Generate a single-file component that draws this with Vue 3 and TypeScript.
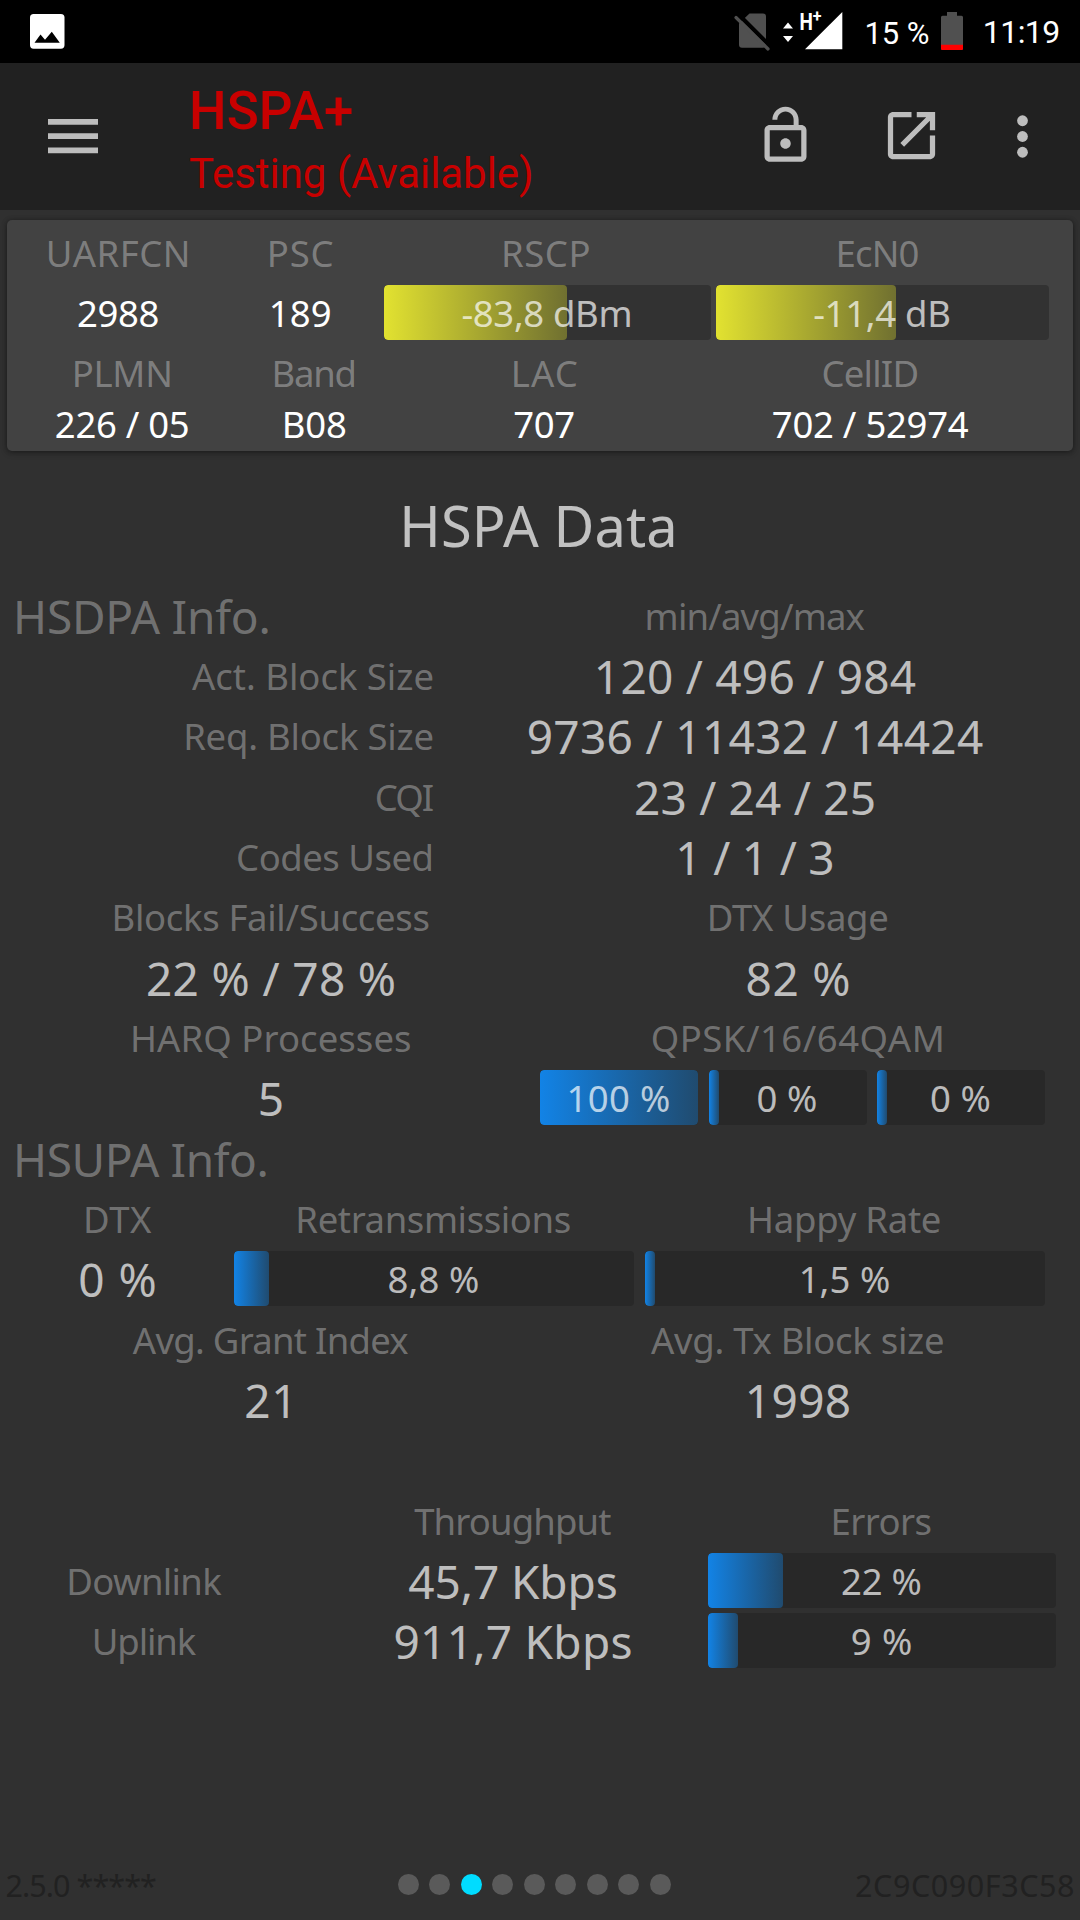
<script setup lang="ts">
type Kind = 'label' | 'value' | 'small' | 'section' | 'end' | 'bars' | 'empty'

interface Meter {
  text: string
  ink: number
  width: number
  fill: number
}

interface Cell {
  kind: Kind
  text?: string
  ink?: number
  meters?: Meter[]
}

interface Row {
  layout: string
  cells: Cell[]
}

const label = (text: string, ink: number): Cell => ({ kind: 'label', text, ink })
const value = (text: string, ink: number): Cell => ({ kind: 'value', text, ink })
const small = (text: string, ink: number): Cell => ({ kind: 'small', text, ink })
const end = (text: string, ink: number): Cell => ({ kind: 'end', text, ink })
const section = (text: string, ink: number): Cell => ({ kind: 'section', text, ink })
const empty = (): Cell => ({ kind: 'empty' })
const meters = (...list: [string, number, number, number][]): Cell => ({
  kind: 'bars',
  meters: list.map(([text, ink, width, fill]) => ({ text, ink, width, fill })),
})

const cellRows: Row[] = [
  { layout: 'signal', cells: [label('UARFCN', 139), label('PSC', 62.7), label('RSCP', 85.5), label('EcN0', 80)] },
  { layout: 'signal', cells: [small('2988', 80.6), small('189', 58), meters(['-83,8 dBm', 168, 327, 183]), meters(['-11,4 dB', 135, 333, 180])] },
  { layout: 'identity', cells: [label('PLMN', 95.5), label('Band', 80.2), label('LAC', 63), label('CellID', 94)] },
  { layout: 'identity low', cells: [small('226 / 05', 131.9), small('B08', 61.2), small('707', 60), small('702 / 52974', 196)] },
]

const dataRows: Row[] = [
  { layout: 'stats', cells: [section('HSDPA Info.', 251.5), label('min/avg/max', 217)] },
  { layout: 'stats', cells: [end('Act. Block Size', 240.4), value('120 / 496 / 984', 318)] },
  { layout: 'stats', cells: [end('Req. Block Size', 246.3), value('9736 / 11432 / 14424', 454.3)] },
  { layout: 'stats', cells: [end('CQI', 55.8), value('23 / 24 / 25', 237.6)] },
  { layout: 'stats', cells: [end('Codes Used', 193.5), value('1 / 1 / 3', 153)] },
  { layout: 'halves', cells: [label('Blocks Fail/Success', 314), label('DTX Usage', 177.6)] },
  { layout: 'halves', cells: [value('22 % / 78 %', 246), value('82 %', 100.6)] },
  { layout: 'halves', cells: [label('HARQ Processes', 277.2), label('QPSK/16/64QAM', 288.9)] },
  { layout: 'halves', cells: [value('5', 21.7), meters(['100 %', 99.5, 158, 158], ['0 %', 58.5, 158, 10], ['0 %', 58.5, 168, 10])] },
  { layout: 'stats', cells: [section('HSUPA Info.', 249.5), empty()] },
  { layout: 'uplink', cells: [label('DTX', 66.1), label('Retransmissions', 271.3), label('Happy Rate', 189.8)] },
  { layout: 'uplink', cells: [value('0 %', 74.4), meters(['8,8 %', 89.5, 400, 35]), meters(['1,5 %', 87.3, 400, 10])] },
  { layout: 'halves', cells: [label('Avg. Grant Index', 275.5), label('Avg. Tx Block size', 292)] },
  { layout: 'halves', cells: [value('21', 42), value('1998', 101)] },
  { layout: 'halves', cells: [empty(), empty()] },
  { layout: 'rates', cells: [empty(), label('Throughput', 197), label('Errors', 97)] },
  { layout: 'rates', cells: [label('Downlink', 153), value('45,7 Kbps', 207.3), meters(['22 %', 78.5, 348, 75])] },
  { layout: 'rates', cells: [label('Uplink', 102), value('911,7 Kbps', 235), meters(['9 %', 59.4, 348, 30])] },
]

const pages = 9
const activePage = 3

// Tracks a text out or in so that its drawn glyphs span the given width.
const context = document.createElement('canvas').getContext('2d')
const vFit = {
  mounted(el: HTMLElement, { value: target }: { value?: number }) {
    const text = el.textContent ?? ''
    if (!target || !context || text.length < 2) return
    const style = getComputedStyle(el)
    context.font = `${style.fontWeight} ${style.fontSize} ${style.fontFamily}`
    const m = context.measureText(text)
    const drawn = m.actualBoundingBoxRight + m.actualBoundingBoxLeft
    const spacing = (target - drawn) / (text.length - 1)
    el.style.letterSpacing = `${spacing}px`
    el.style.marginRight = `${-spacing}px`
  },
}
</script>

<template>
  <div class="screen">
    <header class="status">
      <svg class="picture" width="35" height="35" viewBox="0 0 35 35">
        <rect width="34.5" height="34.7" rx="3.6" fill="#fff" />
        <path d="M4.5 28.8 10.5 20.6 15 25.8 21.8 17.7 29.8 28.8Z" fill="#000" />
      </svg>
      <svg class="sim" width="38" height="42" viewBox="0 0 38 42">
        <path d="M15.5 3.5H29a3 3 0 0 1 3 3V34.7a3 3 0 0 1-3 3H8a3 3 0 0 1-3-3V13.5Z" fill="#505050" />
        <path d="M5 5 37 37" stroke="#000" stroke-width="4.2" />
        <path d="M2 7.5 34 39" stroke="#505050" stroke-width="3.2" stroke-linecap="round" />
      </svg>
      <svg class="signal-icon" width="64" height="54" viewBox="0 0 64 54">
        <path d="M8 18.5 13 24.6H3ZM8 37.9 13 32H3Z" fill="#fff" />
        <path d="M25 45.3 62.3 8V45.3Z" fill="#fff" />
        <text x="0" y="0" transform="translate(19.5 26) scale(.79 1)" class="net">H</text>
        <text x="0" y="0" transform="translate(32.8 18.2)" class="plus">+</text>
      </svg>
      <span class="percent"><span v-fit="62.3">15 %</span></span>
      <svg class="battery" width="22" height="38" viewBox="0 0 22 38">
        <path d="M6 0H16V3.7H20.5A1.5 1.5 0 0 1 22 5.2V36.5A1.5 1.5 0 0 1 20.5 38H1.5A1.5 1.5 0 0 1 0 36.5V5.2A1.5 1.5 0 0 1 1.5 3.7H6Z" fill="#505050" />
        <path d="M0 32.7H22V36.5A1.5 1.5 0 0 1 20.5 38H1.5A1.5 1.5 0 0 1 0 36.5Z" fill="#f00" />
      </svg>
      <span class="clock"><span v-fit="73.3">11:19</span></span>
    </header>

    <nav class="toolbar">
      <svg class="menu" width="50" height="35" viewBox="0 0 50 35">
        <path d="M0 0H50V5.8H0ZM0 14.3H50V20.1H0ZM0 28.5H50V34.3H0Z" />
      </svg>
      <div class="titles">
        <h1><span v-fit="160">HSPA+</span></h1>
        <p><span v-fit="341">Testing (Available)</span></p>
      </div>
      <svg class="lock" width="63" height="63" viewBox="0 0 24 24">
        <path d="M12 17c1.100 0 2-.9 2-2s-.9-2-2-2-2 .9-2 2 .9 2 2 2zm6-9h-1V6c0-2.760-2.240-5-5-5S7 3.240 7 6h1.900c0-1.710 1.390-3.100 3.100-3.100 1.710 0 3.100 1.390 3.100 3.100v2H6c-1.100 0-2 .9-2 2v10c0 1.100.9 2 2 2h12c1.100 0 2-.9 2-2V10c0-1.100-.9-2-2-2zm0 12H6V10h12v10z" />
      </svg>
      <svg class="open" width="63" height="63" viewBox="0 0 24 24">
        <path d="M19 19H5V5h7V3H5c-1.110 0-2 .9-2 2v14c0 1.100.89 2 2 2h14c1.100 0 2-.9 2-2v-7h-2v7zM14 3v2h3.590l-9.830 9.830 1.410 1.410L19 6.410V10h2V3h-7z" />
      </svg>
      <svg class="more" width="63" height="63" viewBox="0 0 24 24">
        <circle cx="12" cy="6" r="2.05" /><circle cx="12" cy="12" r="2.05" /><circle cx="12" cy="18" r="2.05" />
      </svg>
    </nav>

    <section class="card">
      <div v-for="(row, r) in cellRows" :key="r" class="row" :class="row.layout">
        <div v-for="(cell, c) in row.cells" :key="c" class="cell" :class="cell.kind">
          <template v-if="cell.meters">
            <div v-for="(m, i) in cell.meters" :key="i" class="meter yellow" :style="{ width: m.width + 'px' }">
              <div class="fill" :style="{ width: m.fill + 'px' }"></div>
              <span v-fit="m.ink" class="reading">{{ m.text }}</span>
            </div>
          </template>
          <span v-else v-fit="cell.ink">{{ cell.text }}</span>
        </div>
      </div>
    </section>

    <h2 class="title"><span v-fit="269">HSPA Data</span></h2>

    <main class="data">
      <div v-for="(row, r) in dataRows" :key="r" class="row" :class="row.layout">
        <div v-for="(cell, c) in row.cells" :key="c" class="cell" :class="cell.kind">
          <template v-if="cell.meters">
            <div v-for="(m, i) in cell.meters" :key="i" class="meter blue" :style="{ width: m.width + 'px' }">
              <div class="fill" :style="{ width: m.fill + 'px' }"></div>
              <span v-fit="m.ink" class="reading">{{ m.text }}</span>
            </div>
          </template>
          <span v-else v-fit="cell.ink">{{ cell.text }}</span>
        </div>
      </div>
    </main>

    <footer class="footer">
      <span v-fit="149.5">2.5.0 *****</span>
      <div class="dots">
        <i v-for="n in pages" :key="n" :class="{ on: n === activePage }"></i>
      </div>
      <span v-fit="217">2C9C090F3C58</span>
    </footer>
  </div>
</template>

<style>
body {
  background: #303030;
}
</style>

<style scoped>
.screen {
  box-sizing: border-box;
  display: flex;
  flex-direction: column;
  width: 1080px;
  height: 1920px;
  overflow: hidden;
  background: #303030;
  font-family: 'Noto Sans', 'Open Sans', sans-serif;
  white-space: pre;
}
svg {
  display: block;
  flex: none;
}
.status {
  display: flex;
  flex: none;
  align-items: flex-start;
  box-sizing: border-box;
  height: 63px;
  padding: 0 17px 0 30px;
  background: #000;
  color: #fff;
  font-family: Roboto, sans-serif;
}
.picture {
  margin-top: 14px;
}
.sim {
  margin: 10px 8px 0 auto;
}
.signal-icon {
  margin: 4px 19px 0 0;
}
.net {
  fill: #fff;
  font: 700 24px Roboto, sans-serif;
}
.plus {
  fill: #fff;
  font: 700 16px Roboto, sans-serif;
}
.percent,
.clock {
  display: flex;
  justify-content: center;
}
.percent {
  width: 68px;
  margin-right: 10px;
  font-size: 31px;
  line-height: 67px;
}
.battery {
  margin: 12px 17px 0 0;
}
.clock {
  width: 83px;
  font-size: 32px;
  line-height: 64px;
}
.toolbar {
  display: flex;
  flex: none;
  align-items: center;
  height: 147px;
  background: #212121;
  font-family: Roboto, sans-serif;
}
.toolbar svg {
  fill: #bdbdbd;
}
.menu {
  margin: 0 88px 0 48px;
}
.titles {
  width: 568px;
  padding-top: 11px;
  color: #c80000;
}
.titles h1,
.titles p {
  margin: 0 0 0 3px;
  font-weight: 400;
}
.titles h1 {
  font-size: 53px;
  font-weight: 500;
  line-height: 64px;
}
.titles p {
  font-size: 42px;
  line-height: 62px;
}
.lock,
.open {
  margin-bottom: 2px;
}
.open {
  margin-left: 63px;
}
.more {
  margin-left: 48px;
}
.card {
  flex: none;
  box-sizing: border-box;
  width: 1066px;
  height: 231px;
  margin: 10px 7px 0;
  padding: 2.5px 0 0 11px;
  border-radius: 5px;
  background: #424242;
  box-shadow: 0 2px 6px rgba(0, 0, 0, 0.3), 0 0 5px rgba(0, 0, 0, 0.25);
}
.row {
  display: grid;
}
.card .row {
  height: 60px;
}
.card .low {
  height: 40px;
}
.signal {
  grid-template-columns: 202px 162px 329px 338px;
}
.signal .label:last-child {
  padding-right: 5px;
}
.signal .bars {
  margin-left: 2px;
}
.signal .bars:last-child {
  margin-left: 5px;
}
.identity {
  grid-template-columns: 210px 174px 286px 366px;
}
.cell {
  display: flex;
  align-items: center;
  justify-content: center;
  min-width: 0;
  line-height: 40px;
}
.label,
.small {
  padding-right: 1.5px;
}
.card .label,
.card .small,
.card .reading {
  padding-top: 1px;
}
.data .cell > span,
.data .reading {
  padding-top: 1.5px;
}
.label,
.end {
  color: rgba(255, 255, 255, 0.32);
  font-size: 36.5px;
}
.end {
  justify-content: flex-end;
}
.small {
  color: #fff;
  font-size: 36.5px;
}
.value {
  padding-right: 1px;
  color: rgba(255, 255, 255, 0.7);
  font-size: 46px;
}
.section {
  justify-content: flex-start;
  padding-left: 13px;
  color: rgba(255, 255, 255, 0.32);
  font-size: 46px;
}
.bars {
  justify-content: space-between;
}
.meter {
  display: grid;
  flex: none;
  height: 55px;
  overflow: hidden;
  border-radius: 4px;
  background: #282828;
}
.yellow {
  background: #323232;
}
.fill,
.reading {
  grid-area: 1 / 1;
}
.fill {
  height: 55px;
  border-radius: 4px;
}
.yellow .fill {
  background: linear-gradient(90deg, #e2e230, #707030);
}
.blue .fill {
  background: linear-gradient(90deg, #1283e6, #204b6f);
}
.reading {
  justify-self: center;
  align-self: center;
  padding-right: 1px;
  color: rgba(255, 255, 255, 0.7);
  font-size: 36.5px;
}
.title {
  display: flex;
  flex: none;
  justify-content: center;
  margin: 44px 0 0;
  padding-right: 3px;
  color: rgba(255, 255, 255, 0.7);
  font-size: 56px;
  font-weight: 450;
  line-height: 60px;
}
.data {
  flex: none;
  margin-top: 29.6px;
}
.data .row {
  height: 60.35px;
}
.stats {
  grid-template-columns: 434px 643px;
}
.halves {
  grid-template-columns: 535px 517px;
  column-gap: 1px;
  padding-left: 4px;
}
.halves .bars {
  padding-right: 12px;
}
.uplink {
  grid-template-columns: 232px 400px 400px;
  padding-left: 2px;
}
.uplink .cell:last-child {
  margin: 0 -11px 0 11px;
}
.rates {
  grid-template-columns: 319px 389px 348px;
}
.rates .cell:first-child {
  padding-right: 31px;
}
.footer {
  display: flex;
  align-items: center;
  justify-content: space-between;
  flex: none;
  height: 42px;
  margin-top: auto;
  padding: 0 5.5px 14px;
  color: #212121;
  font-size: 30.5px;
  line-height: 42px;
}
.dots {
  display: flex;
  gap: 10.5px;
  margin: 0 0 1px 57px;
}
.dots i {
  width: 21px;
  height: 21px;
  border-radius: 50%;
  background: #5a5a5a;
}
.dots .on {
  background: #00dcff;
}
</style>
